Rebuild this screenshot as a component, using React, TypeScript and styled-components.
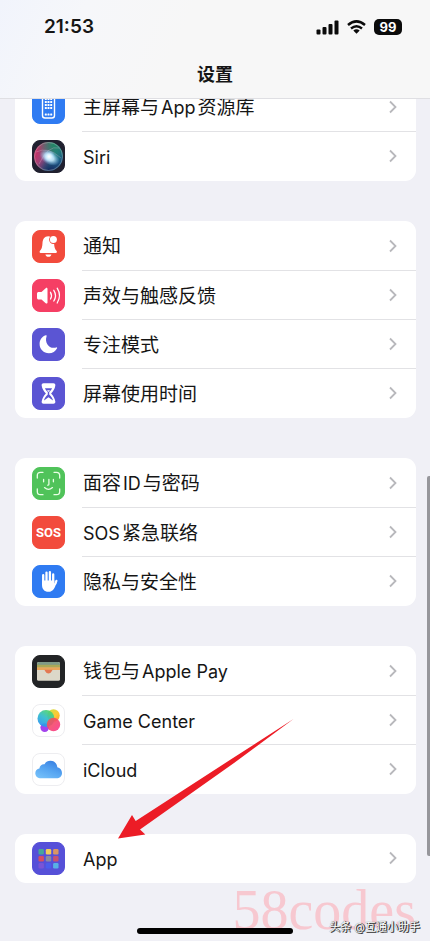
import React from "react";
import styled, { createGlobalStyle } from "styled-components";

const GlobalStyle = createGlobalStyle`
  *, *::before, *::after { box-sizing: border-box; }
  body {
    margin: 0;
    background: #f0f0f6;
    color: #151515;
    font-family: Inter, "Noto Sans CJK SC", sans-serif;
  }
`;

const Screen = styled.div`
  position: relative;
  display: flex;
  flex-direction: column;
  min-height: 100vh;
  overflow: hidden;
  background: #f0f0f6;
`;

const Header = styled.header`
  position: sticky;
  top: 0;
  z-index: 2;
  padding-top: 15px;
  border-bottom: 1px solid #dfdfe3;
  background: linear-gradient(115deg, #f1f4fc 0, #f6f7fa 80px, #f7f7f7 180px);
`;

const StatusBar = styled.div`
  display: flex;
  align-items: center;
  justify-content: space-between;
  height: 24px;
  padding: 0 28px 0 44px;
`;

const Clock = styled.time`
  font-size: 19px;
  line-height: 24px;
  font-weight: 600;
`;

const StatusIcons = styled.div`
  display: flex;
  align-items: center;
  gap: 8px;
`;

const Battery = styled.span`
  display: flex;
  align-items: center;
  justify-content: center;
  width: 28px;
  height: 16px;
  border-radius: 5px;
  background: #0b0b0b;
  color: #fff;
  font-size: 13px;
  line-height: 16px;
  font-weight: 700;
`;

const Title = styled.h1`
  margin: 0;
  padding: 24px 0 11px;
  font-size: 18px;
  line-height: 24px;
  font-weight: 600;
  text-align: center;
`;

const Groups = styled.main`
  display: flex;
  flex-direction: column;
  gap: 40px;
  margin-top: -17px;
  padding: 0 14px 58px 15px;
`;

const Group = styled.ul`
  margin: 0;
  padding: 0;
  list-style: none;
  border-radius: 11px;
  background: #fff;
`;

const Item = styled.li`
  height: 49px;

  &:first-child:not(:last-child) {
    height: 50px;
  }
`;

const RowLink = styled.a`
  display: flex;
  align-items: center;
  height: 100%;
  padding-left: 17px;
  color: inherit;
  text-decoration: none;
`;

const RowBody = styled.span`
  display: flex;
  flex: 1;
  align-items: center;
  justify-content: space-between;
  align-self: stretch;
  margin-left: 17px;
  padding: 0 18px 0 1px;
  border-bottom: 1px solid #e2e2e5;

  ${Item}:last-child & {
    border-bottom-color: transparent;
  }
`;

const Label = styled.span`
  display: flex;
  align-items: baseline;
  gap: 2px;
  padding-top: 3px;
  font-size: 19px;
  line-height: 26px;
  white-space: nowrap;
`;

const Latin = styled.span`
  font-size: 18px;
`;

const ScrollThumb = styled.div`
  position: absolute;
  top: 476px;
  right: 0;
  width: 3px;
  height: 380px;
  border-radius: 2px 0 0 2px;
  background: #96969b;
`;

const Pointer = styled.svg`
  position: absolute;
  top: 718px;
  left: 118px;
  pointer-events: none;
`;

const HomeIndicator = styled.div`
  position: absolute;
  bottom: 7px;
  left: 50%;
  width: 156px;
  height: 6px;
  border-radius: 3px;
  background: #000;
  transform: translateX(-50%);
`;

const SiteMark = styled.div`
  position: absolute;
  right: 14px;
  bottom: 1px;
  color: #f7c8d0;
  font-family: "Liberation Serif", serif;
  font-size: 56px;
  line-height: 60px;
`;

const AuthorMark = styled.div`
  position: absolute;
  right: 10px;
  bottom: 6px;
  color: #fff;
  font-size: 11px;
  line-height: 16px;
  font-weight: 400;
  white-space: nowrap;
  text-shadow: 1px 1px 0 #333, 1px 0 0 #444, 0 0 1px #444;
`;

const TileSvg = styled.svg`
  display: block;
  flex: none;
`;

function Tile({ fill, outlined, children }: { fill: string; outlined?: boolean; children: React.ReactNode }) {
  return (
    <TileSvg width="33" height="33" viewBox="0 0 33 33" aria-hidden="true">
      <rect x="0.5" y="0.5" width="32" height="32" rx="7.5" fill={fill} stroke={outlined ? "#ededf0" : fill} />
      {children}
    </TileSvg>
  );
}

const HomeScreenIcon = () => (
  <Tile fill="#2f7bf2">
    <rect x="10.5" y="4" width="12" height="23" rx="2.5" fill="none" stroke="#fff" strokeWidth="1.4" />
    <g fill="#fff">
      {[7, 10, 13, 16].map((y) => [12.8, 15.5, 18.2].map((x) => <rect key={`${x}-${y}`} x={x} y={y} width="2" height="2" rx="0.5" />))}
      {[12.8, 15.5, 18.2].map((x) => <rect key={x} x={x} y="22.6" width="2" height="2" rx="0.5" />)}
    </g>
  </Tile>
);

const SiriIcon = () => (
  <Tile fill="#20202f">
    <defs>
      <linearGradient id="siriBase" x1="0" y1="0.3" x2="1" y2="0.7">
        <stop offset="0" stopColor="#d42a62" />
        <stop offset="0.4" stopColor="#8d4d80" />
        <stop offset="0.65" stopColor="#257b8f" />
        <stop offset="1" stopColor="#174c83" />
      </linearGradient>
      <radialGradient id="siriGreen" cx="0.68" cy="0.1" r="0.6">
        <stop offset="0" stopColor="#218866" />
        <stop offset="1" stopColor="#218866" stopOpacity="0" />
      </radialGradient>
      <radialGradient id="siriBlue" cx="0.55" cy="1" r="0.5">
        <stop offset="0" stopColor="#16245e" />
        <stop offset="1" stopColor="#16245e" stopOpacity="0" />
      </radialGradient>
      <radialGradient id="siriGlow">
        <stop offset="0" stopColor="#fff" />
        <stop offset="0.4" stopColor="#d6f2ff" stopOpacity="0.85" />
        <stop offset="1" stopColor="#8bc8ff" stopOpacity="0" />
      </radialGradient>
    </defs>
    <circle cx="16.5" cy="16.5" r="14.5" fill="url(#siriBase)" />
    <circle cx="16.5" cy="16.5" r="14.5" fill="url(#siriGreen)" />
    <circle cx="16.5" cy="16.5" r="14.5" fill="url(#siriBlue)" />
    <circle cx="16.5" cy="16.5" r="14" fill="none" stroke="#b7c5bf" strokeOpacity="0.5" strokeWidth="0.8" />
    <path d="M4 12Q16 6 29 18M7 24Q16 5 27 8" fill="none" stroke="#d7b7d5" strokeOpacity="0.3" />
    <ellipse cx="17.5" cy="17.5" rx="11" ry="7" fill="url(#siriGlow)" transform="rotate(30 17.5 17.5)" />
    <circle cx="17" cy="16.5" r="6" fill="url(#siriGlow)" />
  </Tile>
);

const BellIcon = () => (
  <Tile fill="#f24b3c">
    <path d="M16.3 6.2c-4 0-5.6 3.1-5.8 6.8-.2 4.4-1 6.2-2.5 7.8-.8.9-.4 2.1.7 2.1h15.1c1.1 0 1.5-1.2.7-2.1-1.5-1.6-2.2-3.3-2.4-7.8-.2-3.7-1.8-6.8-5.8-6.8Z" fill="#fff" />
    <path d="M13.4 24.4h6c-.4 1.6-1.4 2.4-3 2.4s-2.6-.8-3-2.4Z" fill="#fff" />
    <circle cx="21.4" cy="9.6" r="4.3" fill="#f24b3c" />
    <circle cx="21.4" cy="9.6" r="3.5" fill="#fff" />
  </Tile>
);

const SpeakerIcon = () => (
  <Tile fill="#f53f64">
    <path d="M5 14.7c0-1.2.6-1.8 1.8-1.8h2.7l4.2-3.7c.8-.7 1.8-.3 1.8.8v13.4c0 1.1-1 1.5-1.8.8l-4.2-3.7H6.800c-1.2 0-1.8-.6-1.8-1.8Z" fill="#fff" />
    <path d="M18.5 13.3q2 3.300 0 6.700M21.800 11.300q3.400 5.300 0 10.700M25.200 9.200q4.600 7.400 0 14.800" fill="none" stroke="#fff" strokeWidth="1.3" strokeLinecap="round" />
  </Tile>
);

const MoonIcon = () => (
  <Tile fill="#5b55d3">
    <path d="M13.700 7.300C10 8.600 7.600 12 7.600 16c0 5.200 4.100 9.300 9.300 9.300 3.600 0 6.700-2 8.200-5.100.2-.6-.2-1-.8-.8-6.500 2.300-12.200-4.200-9.700-11.200.2-.7-.2-1.100-.9-.9Z" fill="#fff" />
  </Tile>
);

const HourglassIcon = () => (
  <Tile fill="#5b55d3">
    <path d="M11.600 6.300h9.800c1.500 0 2.200 1 1.900 2.400-.5 3-1.900 5.300-4.200 7.800 2.300 2.500 3.700 4.800 4.200 7.800.3 1.400-.4 2.400-1.900 2.400h-9.800c-1.500 0-2.200-1-1.900-2.400.5-3 1.900-5.300 4.200-7.800-2.300-2.500-3.700-4.800-4.200-7.800-.3-1.400.4-2.400 1.900-2.400Z" fill="#fff" />
    <path d="M12.900 11.200h7.200c-.9 1.700-1.900 2.800-2.900 3.900v2.400c2.100 2.200 3.500 4 3.800 6.100l-4.500-3.300-4.500 3.300c.3-2.100 1.700-3.900 3.800-6.100v-2.400c-1-1.100-2-2.200-2.900-3.900Z" fill="#5b55d3" />
    <path d="M15 13.200h3l-1.500 1.900Z" fill="#fff" />
  </Tile>
);

const FaceIcon = () => (
  <Tile fill="#50c35a">
    <g fill="none" stroke="#e9ffe6" strokeWidth="1.3" strokeLinecap="round" strokeLinejoin="round">
      <path d="M5.300 11V8.500Q5.300 5.300 8.500 5.300H11M22 5.300h2.500q3.200 0 3.200 3.200V11M27.700 22v2.500q0 3.200-3.200 3.200H22M11 27.700H8.500q-3.200 0-3.200-3.200V22" />
      <path d="M11.600 12.400v2.400M21.400 12.400v2.400M16.900 12.400v4.800q0 1-1.200 1M12.500 20.600q4 3.500 8 0" />
    </g>
  </Tile>
);

const SosIcon = () => (
  <Tile fill="#f24b3c">
    <text x="16.500" y="21" textAnchor="middle" fill="#fff" fontFamily="Roboto, sans-serif" fontSize="13" fontWeight="700">SOS</text>
  </Tile>
);

const HandIcon = () => (
  <Tile fill="#2f7bf2">
    <g fill="none" stroke="#fff" strokeLinecap="round" strokeLinejoin="round">
      <path d="M11.200 18V10.200M14.500 16V7.600M17.900 16V7.200M21.200 17V9.400" strokeWidth="2.300" />
      <path d="M23.300 18.800l1.100-3" strokeWidth="2.200" />
    </g>
    <path d="M10 15.500h12.300v3l2.200-.7c-.8 2.600-1.600 4.600-2.700 6.200-1.300 1.900-3 2.800-5.300 2.800-4.300 0-6.500-2.700-6.500-7Z" fill="#fff" />
  </Tile>
);

const WalletIcon = () => (
  <Tile fill="#222426">
    <rect x="5" y="7" width="23" height="18.500" rx="1.500" fill="#dcd8c9" />
    <path d="M5 9q0-2 2-2h19q2 0 2 2v1H5Z" fill="#7f9b87" />
    <path d="M5 9.800h23v3H5Z" fill="#a9a957" />
    <path d="M5 12.400h23v3H5Z" fill="#e9a65a" />
    <path d="M5 15h7.500c1.200 0 1.500 3.500 4 3.500s2.800-3.500 4-3.500H28v9q0 1.500-1.500 1.500h-20Q5 25.500 5 24Z" fill="#dcd8c9" />
    <path d="M12.200 14.800h8.600c-1 .6-1.500 3.700-4.300 3.700s-3.300-3.100-4.300-3.700Z" fill="#e37852" />
  </Tile>
);

const GameCenterIcon = () => (
  <Tile fill="#fff" outlined>
    <defs>
      <linearGradient id="gameYellow" x1="0" y1="0" x2="1" y2="1"><stop stopColor="#c5e34a" /><stop offset="0.6" stopColor="#ffc735" /><stop offset="1" stopColor="#ff8f33" /></linearGradient>
      <linearGradient id="gameBlue" x1="0.8" y1="0" x2="0.2" y2="1"><stop stopColor="#55d957" /><stop offset="0.5" stopColor="#2fbbcb" /><stop offset="1" stopColor="#298ff5" /></linearGradient>
      <linearGradient id="gamePink" x1="0" y1="0" x2="1" y2="1"><stop stopColor="#ef5c49" /><stop offset="1" stopColor="#fa3390" /></linearGradient>
    </defs>
    <circle cx="21.5" cy="11.500" r="6.200" fill="url(#gameYellow)" />
    <circle cx="12.700" cy="23.600" r="4.300" fill="#a343ed" />
    <circle cx="14" cy="14.500" r="8.500" fill="url(#gameBlue)" fillOpacity="0.92" />
    <circle cx="21.500" cy="20.500" r="6.700" fill="url(#gamePink)" fillOpacity="0.9" />
  </Tile>
);

const CloudIcon = () => (
  <Tile fill="#fff" outlined>
    <defs>
      <linearGradient id="cloudFill" x1="0.8" y1="0" x2="0.2" y2="1"><stop stopColor="#367de1" /><stop offset="0.5" stopColor="#55a4f1" /><stop offset="1" stopColor="#75c0fa" /></linearGradient>
    </defs>
    <path d="M9 25.300c-3.300 0-5.700-2-5.700-5 0-2.700 1.700-4.500 4.100-4.900.3-2.800 2.500-4.500 5.100-4.200 1.200-2.200 3.300-3.400 5.900-3.400 4 0 6.700 2.800 6.900 6.500 2.900.7 4.700 2.900 4.700 5.600 0 3.200-2.300 5.400-5.600 5.400Z" fill="url(#cloudFill)" />
  </Tile>
);

const APP_COLORS = ["#46a69a", "#efcb5b", "#d99563", "#d64d63", "#8c899d", "#c55273", "#7954d7", "#4c5cec", "#58b1e5"];

const AppsIcon = () => (
  <Tile fill="#5650d8">
    {APP_COLORS.map((color, i) => (
      <rect key={color} x={6.5 + (i % 3) * 7.3} y={7 + Math.floor(i / 3) * 7} width="5.4" height="5.4" rx="1.2" fill={color} />
    ))}
  </Tile>
);

const Chevron = () => (
  <TileSvg width="10" height="14" viewBox="0 0 10 14" aria-hidden="true">
    <path d="M2 1.500 7.500 7 2 12.500" fill="none" stroke="#b8b8bc" strokeWidth="1.8" />
  </TileSvg>
);

type Entry = { id: string; label: React.ReactNode; icon: () => React.ReactElement };

const GROUPS: Entry[][] = [
  [
    { id: "home-screen", label: <>主屏幕与<Latin>App</Latin>资源库</>, icon: HomeScreenIcon },
    { id: "siri", label: <Latin>Siri</Latin>, icon: SiriIcon },
  ],
  [
    { id: "notifications", label: "通知", icon: BellIcon },
    { id: "sounds", label: "声效与触感反馈", icon: SpeakerIcon },
    { id: "focus", label: "专注模式", icon: MoonIcon },
    { id: "screen-time", label: "屏幕使用时间", icon: HourglassIcon },
  ],
  [
    { id: "face-id", label: <>面容<Latin>ID</Latin>与密码</>, icon: FaceIcon },
    { id: "sos", label: <><Latin>SOS</Latin>紧急联络</>, icon: SosIcon },
    { id: "privacy", label: "隐私与安全性", icon: HandIcon },
  ],
  [
    { id: "wallet", label: <>钱包与<Latin>Apple Pay</Latin></>, icon: WalletIcon },
    { id: "game-center", label: <Latin>Game Center</Latin>, icon: GameCenterIcon },
    { id: "icloud", label: <Latin>iCloud</Latin>, icon: CloudIcon },
  ],
  [{ id: "apps", label: <Latin>App</Latin>, icon: AppsIcon }],
];

export default function App() {
  return (
    <Screen>
      <GlobalStyle />
      <Header>
        <StatusBar>
          <Clock>21:53</Clock>
          <StatusIcons>
            <svg width="23" height="15" viewBox="0 0 23 15" aria-hidden="true">
              <g fill="#0b0b0b">
                <rect x="0.5" y="9.5" width="4" height="5" rx="1" />
                <rect x="6.500" y="7" width="4" height="7.5" rx="1" />
                <rect x="12.500" y="4" width="4" height="10.5" rx="1" />
                <rect x="18.500" y="0.5" width="4" height="14" rx="1" />
              </g>
            </svg>
            <svg width="19" height="14" viewBox="0 0 19 14" aria-hidden="true">
              <path d="M1 5Q9.500-2.200 18 5" fill="none" stroke="#0b0b0b" strokeWidth="2.5" />
              <path d="M4 8.500Q9.500 4 15 8.500" fill="none" stroke="#0b0b0b" strokeWidth="2.4" />
              <path d="M6.300 10.500Q9.500 8.200 12.700 10.500L9.500 13.800Z" fill="#0b0b0b" />
            </svg>
            <Battery>99</Battery>
          </StatusIcons>
        </StatusBar>
        <Title>设置</Title>
      </Header>
      <Groups>
        {GROUPS.map((entries) => (
          <Group key={entries[0].id}>
            {entries.map(({ id, label, icon: Icon }) => (
              <Item key={id}>
                <RowLink href={`#${id}`}>
                  <Icon />
                  <RowBody>
                    <Label>{label}</Label>
                    <Chevron />
                  </RowBody>
                </RowLink>
              </Item>
            ))}
          </Group>
        ))}
      </Groups>
      <ScrollThumb />
      <Pointer width="177" height="122" viewBox="0 0 177 122" aria-hidden="true">
        <path d="M0 120.500 14 97 17.700 103 115 40 175.500 1 116 45 22 111.500 27.300 116.500Z" fill="#ec1c26" />
      </Pointer>
      <SiteMark>58codes</SiteMark>
      <HomeIndicator />
      <AuthorMark>头条 @互通小助手</AuthorMark>
    </Screen>
  );
}
